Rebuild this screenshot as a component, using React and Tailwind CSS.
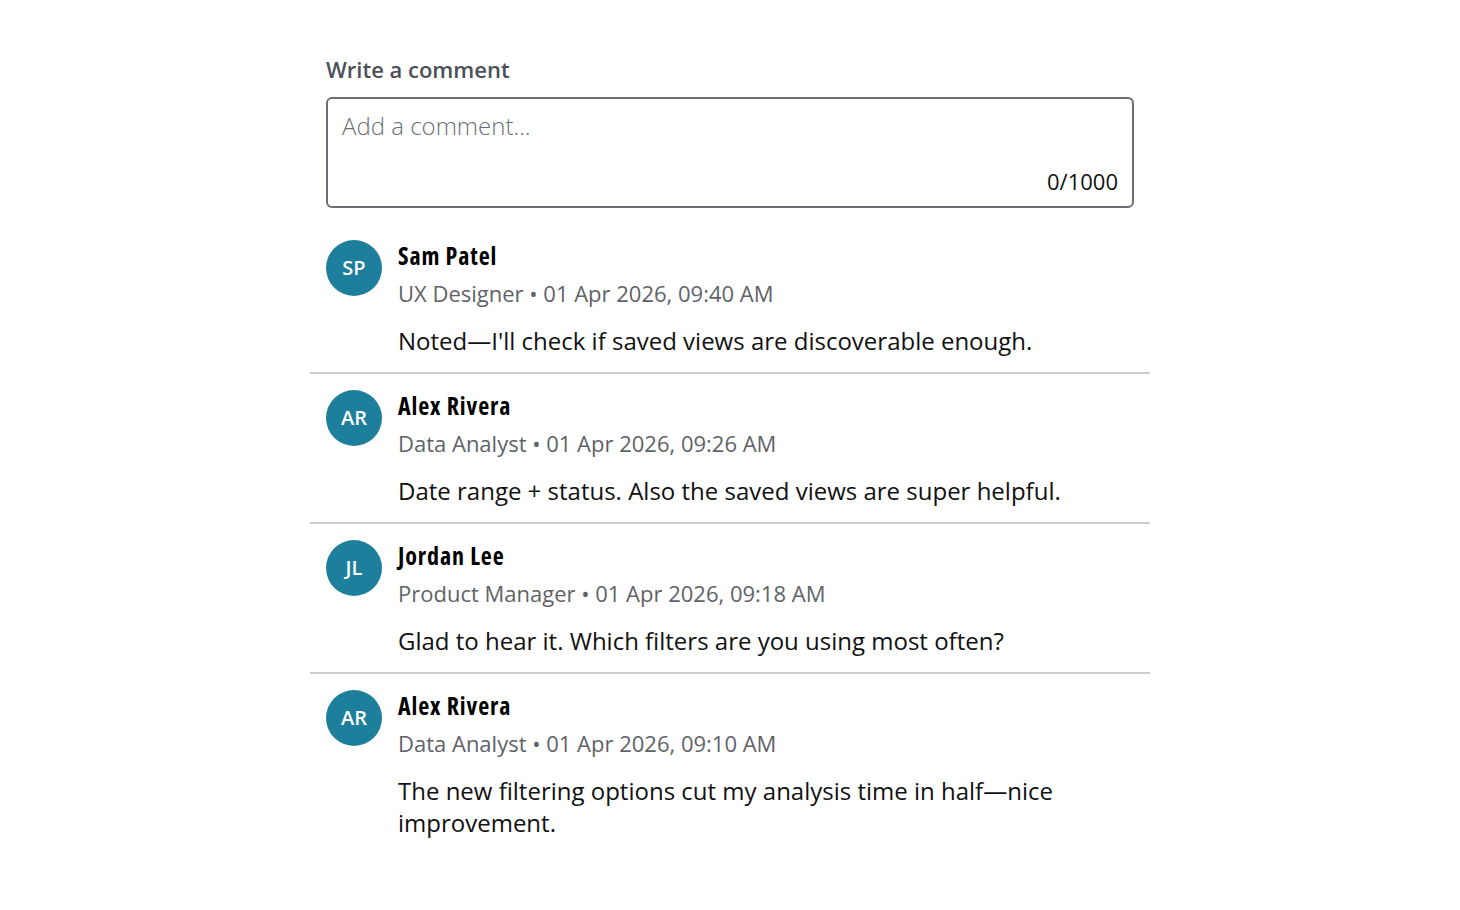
import React from "react";

const comments = [
  { i: "SP", name: "Sam Patel", role: "UX Designer", date: "01 Apr 2026, 09:40 AM", text: "Noted—I'll check if saved views are discoverable enough." },
  { i: "AR", name: "Alex Rivera", role: "Data Analyst", date: "01 Apr 2026, 09:26 AM", text: "Date range + status. Also the saved views are super helpful." },
  { i: "JL", name: "Jordan Lee", role: "Product Manager", date: "01 Apr 2026, 09:18 AM", text: "Glad to hear it. Which filters are you using most often?" },
  { i: "AR", name: "Alex Rivera", role: "Data Analyst", date: "01 Apr 2026, 09:10 AM", text: "The new filtering options cut my analysis time in half—nice improvement." },
];

export default function App() {
  return (
    <div className="min-h-[910px] bg-white" style={{ fontFamily: '"Open Sans", sans-serif' }}>
      <div className="ml-[310px] w-[840px] pt-[53px]">
        <div className="px-4">
          <div className="text-[22px] font-semibold leading-[32px] text-[#4b5058]">Write a comment</div>
          <div className="mt-[12px] h-[111px] rounded-[6px] border-2 border-[#6b6f75] px-[14px] pt-[11px] flex flex-col">
            <div className="text-[24px] font-light leading-[32px] text-[#6b6f75]">Add a comment...</div>
            <div className="mt-auto mb-[11px] text-right text-[22px] leading-[28px] text-[#111]">0/1000</div>
          </div>
        </div>
        <div className="mt-4">
          {comments.map((c, idx) => (
            <div key={idx} className={`flex gap-4 px-4 pt-[16px] pb-[15px] ${idx < comments.length - 1 ? "border-b-2 border-[#cccccc]" : ""}`}>
              <div className="w-14 h-14 shrink-0 rounded-full bg-[#1d7f9c] flex items-center justify-center text-white text-[20px] font-semibold">{c.i}</div>
              <div className="flex-1 pr-8">
                <div className="text-[24px] font-bold leading-[32px] tracking-[0.9px] text-black [font-stretch:condensed]">{c.name}</div>
                <div className="mt-[5px] text-[22px] leading-[32px] text-[#5f6368]">{c.role} • {c.date}</div>
                <div className="mt-[16px] text-[24px] leading-[32px] text-[#111]">{c.text}</div>
              </div>
            </div>
          ))}
        </div>
      </div>
    </div>
  );
}
